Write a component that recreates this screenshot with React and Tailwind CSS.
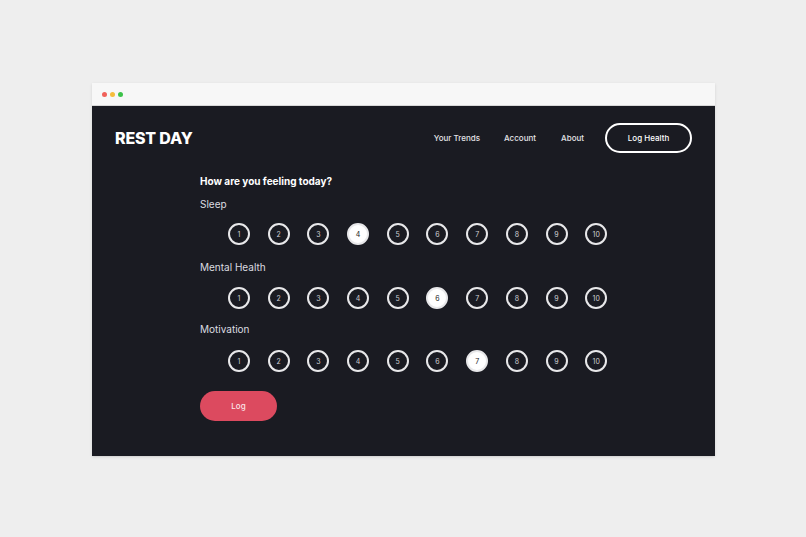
import React, { useState } from "react";

const FONT = { fontFamily: "Inter, 'Noto Sans', sans-serif" };

function Scale({ value, onChange }) {
  return (
    <div className="flex gap-[17.7px] pl-[28px]">
      {[1, 2, 3, 4, 5, 6, 7, 8, 9, 10].map((n) => (
        <button
          key={n}
          onClick={() => onChange(n)}
          className={`w-[22px] h-[22px] rounded-full border-2 border-[#e8e8ea] flex items-center justify-center text-[7px] leading-none ${
            n === value ? "bg-white text-[#1a1b22]" : "text-[#cfcfd4]"
          }`}
        >
          {n}
        </button>
      ))}
    </div>
  );
}

export default function App() {
  const [sleep, setSleep] = useState(4);
  const [mental, setMental] = useState(6);
  const [motivation, setMotivation] = useState(7);

  return (
    <div className="w-[806px] h-[537px] bg-[#eeeeee] pt-[83px] pl-[92px]" style={FONT}>
      <div className="w-[623px] shadow-sm">
        {/* TITLE BAR */}
        <div className="h-[23px] bg-[#f7f7f7] flex items-center gap-[3px] pl-[10px] border-b border-[#d8d8d8]">
          <span className="w-[5px] h-[5px] rounded-full bg-[#f0615a]" />
          <span className="w-[5px] h-[5px] rounded-full bg-[#f5bd3c]" />
          <span className="w-[5px] h-[5px] rounded-full bg-[#3dc24a]" />
        </div>

        {/* APP */}
        <div className="h-[350px] bg-[#1a1b22]">
          {/* HEADER */}
          <div className="flex items-center justify-between pt-[17px] pl-[23px] pr-[23px]">
            <div className="text-white font-extrabold text-[16px] tracking-[-0.2px]">REST DAY</div>
            <div className="flex items-center">
              <span className="text-[#e4e4e8] text-[8px] font-medium">Your Trends</span>
              <span className="text-[#e4e4e8] text-[8px] font-medium ml-[24px]">Account</span>
              <span className="text-[#e4e4e8] text-[8px] font-medium ml-[25px]">About</span>
              <button className="ml-[21px] w-[87px] h-[30px] rounded-full border-2 border-white text-white text-[8px] font-medium">
                Log Health
              </button>
            </div>
          </div>

          {/* FORM */}
          <div className="pl-[108px]">
            <div className="mt-[21px] text-white font-bold text-[10px] leading-[14px]">
              How are you feeling today?
            </div>

            <div className="mt-[9px] text-[#dcdce0] text-[10px] leading-[14px]">Sleep</div>
            <div className="mt-[12px]">
              <Scale value={sleep} onChange={setSleep} />
            </div>

            <div className="mt-[15px] text-[#dcdce0] text-[10px] leading-[14px]">Mental Health</div>
            <div className="mt-[13px]">
              <Scale value={mental} onChange={setMental} />
            </div>

            <div className="mt-[13px] text-[#dcdce0] text-[10px] leading-[14px]">Motivation</div>
            <div className="mt-[14px]">
              <Scale value={motivation} onChange={setMotivation} />
            </div>

            <button className="mt-[19px] w-[77px] h-[30px] rounded-full bg-[#dc4a5f] text-[#fbe3e7] text-[8px] font-medium">
              Log
            </button>
          </div>
        </div>
      </div>
    </div>
  );
}
